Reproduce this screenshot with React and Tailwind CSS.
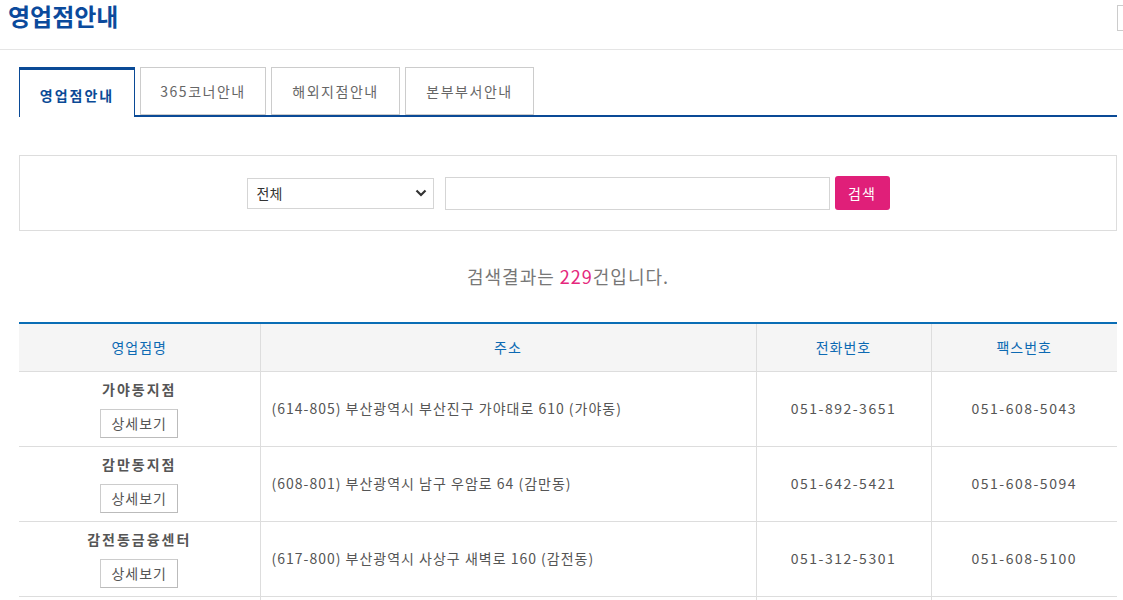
import React from "react";

const rows = [
  ["가야동지점", "(614-805) 부산광역시 부산진구 가야대로 610 (가야동)", "051-892-3651", "051-608-5043"],
  ["감만동지점", "(608-801) 부산광역시 남구 우암로 64 (감만동)", "051-642-5421", "051-608-5094"],
  ["감전동금융센터", "(617-800) 부산광역시 사상구 새벽로 160 (감전동)", "051-312-5301", "051-608-5100"],
];

const font = { fontFamily: '"Noto Sans CJK KR", "Noto Sans", sans-serif' };

export default function App() {
  return (
    <div className="w-[1123px] bg-white text-[#555]" style={font}>
      <div className="h-[50px] border-b border-[#e5e5e5] flex items-start justify-between">
        <h1 className="pl-[8px] pt-[1px] text-[24px] leading-[30px] font-bold text-[#0b4a9c]">영업점안내</h1>
        <div className="mt-[5px] w-[6px] h-[26px] border-l border-y border-[#ccc] bg-white"></div>
      </div>

      <div className="ml-[19px] w-[1098px]">
        <div className="mt-[17px] flex items-start gap-[5px] border-b-2 border-[#0a4a96] h-[50px]">
          <div className="w-[116px] h-[50px] -mb-[2px] pt-[3px] border-t-[3px] border-x border-[#0a4a96] bg-white flex items-center justify-center text-[14px] font-bold tracking-[2px] text-[#0a4a96]">
            영업점안내
          </div>
          {[
            ["365코너안내", "w-[126px]"],
            ["해외지점안내", "w-[129px]"],
            ["본부부서안내", "w-[129px]"],
          ].map(([t, w]) => (
            <div
              key={t}
              className={`${w} h-[48px] border border-[#ccc] bg-white flex items-center justify-center text-[14px] tracking-[1.5px] text-[#666]`}
            >
              {t}
            </div>
          ))}
        </div>

        <div className="mt-[38px] h-[76px] border border-[#ddd] flex items-center justify-center">
          <div className="w-[187px] h-[31px] border border-[#d5d5d5] flex items-center justify-between pl-[9px] pr-[6px] text-[14px] text-[#333] mr-[11px]">
            <span>전체</span>
            <svg width="12" height="10" viewBox="0 0 12 10">
              <path d="M1.5 2.5 L6 7 L10.5 2.5" fill="none" stroke="#333" strokeWidth="2.2" />
            </svg>
          </div>
          <div className="w-[385px] h-[33px] border border-[#d5d5d5] bg-white mr-[5px]"></div>
          <button className="w-[55px] h-[34px] rounded-[3px] bg-[#e01f79] text-white text-[14px] tracking-[1px]">
            검색
          </button>
        </div>

        <p className="mt-[33px] text-center text-[18px] leading-[24px] tracking-[1px] text-[#777]">
          검색결과는 <span className="text-[#e5287d]">229</span>건입니다.
        </p>

        <table className="mt-[34px] w-full table-fixed border-collapse border-t-2 border-[#0a6db5]">
          <colgroup>
            <col className="w-[241px]" />
            <col className="w-[496px]" />
            <col className="w-[175px]" />
            <col className="w-[186px]" />
          </colgroup>
          <thead>
            <tr className="h-[48px] bg-[#f5f5f5] border-b border-[#ddd]">
              {["영업점명", "주소", "전화번호", "팩스번호"].map((h, i) => (
                <th
                  key={h}
                  className={`font-normal text-[14px] tracking-[1px] text-[#0d6ab3] text-center ${i < 3 ? "border-r border-[#ddd]" : ""}`}
                >
                  {h}
                </th>
              ))}
            </tr>
          </thead>
          <tbody>
            {rows.map((r) => (
              <tr key={r[0]} className="h-[75px] border-b border-[#ddd]">
                <td className="border-r border-[#ddd] text-center align-middle">
                  <div className="flex flex-col items-center">
                    <span className="text-[14px] leading-[20px] font-bold tracking-[2px] text-[#555]">{r[0]}</span>
                    <span className="mt-[10px] w-[78px] h-[29px] border border-[#ccc] border-b-[#bbb] border-r-[#bbb] flex items-center justify-center text-[14px] tracking-[1px] text-[#555]">
                      상세보기
                    </span>
                  </div>
                </td>
                <td className="border-r border-[#ddd] pl-[11px] text-[14px] tracking-[1px] text-[#555]">{r[1]}</td>
                <td className="border-r border-[#ddd] text-center text-[14px] tracking-[1.5px] text-[#555]">{r[2]}</td>
                <td className="text-center text-[14px] tracking-[1.5px] text-[#555]">{r[3]}</td>
              </tr>
            ))}
            <tr className="h-[20px]">
              <td className="border-r border-[#ddd]"></td>
              <td className="border-r border-[#ddd]"></td>
              <td className="border-r border-[#ddd]"></td>
              <td></td>
            </tr>
          </tbody>
        </table>
      </div>
    </div>
  );
}
